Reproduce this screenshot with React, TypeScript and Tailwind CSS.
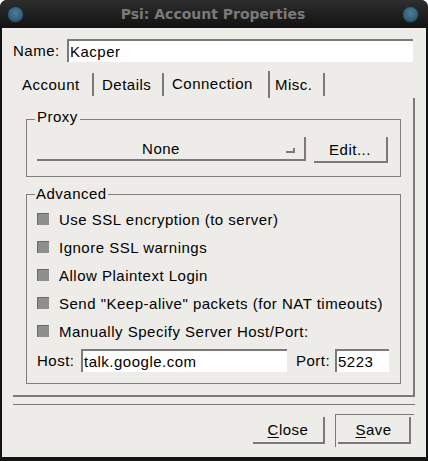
import React from "react";

const font = { fontFamily: '"Liberation Sans", Arial, sans-serif' };

function Check({ label }: { label: string }) {
  return (
    <div className="flex h-[28px] items-center">
      <div className="h-[12px] w-[12px] border-l border-t border-[#6a6a6a] bg-[#8e8e8e]" />
      <span className="ml-[10px]">{label}</span>
    </div>
  );
}

function Circle() {
  return (
    <div className="h-[17px] w-[17px] rounded-full border border-[#1a2a33] bg-[radial-gradient(circle_at_50%_40%,#4a7e9a_0%,#36617a_55%,#22404f_100%)]" />
  );
}

export default function App() {
  return (
    <div
      className="flex h-[461px] w-[428px] flex-col overflow-hidden rounded-t-[7px] bg-[#131313] text-[15px] leading-[17px] tracking-[0.5px] text-black"
      style={font}
    >
      {/* title bar */}
      <div className="flex h-[28px] shrink-0 items-center justify-between bg-gradient-to-b from-[#2e2e2e] to-[#121212] pl-[7px] pr-[9px]">
        <Circle />
        <span
          className="text-[14px] font-bold tracking-normal text-[#7a7a7a]"
          style={{ fontFamily: '"DejaVu Sans", sans-serif' }}
        >
          Psi: Account Properties
        </span>
        <Circle />
      </div>

      {/* content */}
      <div className="mx-[2px] mb-[4px] flex flex-1 flex-col bg-[#edece9] pl-[11px] pr-[11px] pt-[11px]">
        {/* name row */}
        <div className="flex h-[23px] items-center">
          <span className="w-[54px]">Name:</span>
          <div className="flex h-[23px] w-[346px] items-center border-l-2 border-t-2 border-[#7a7a7a] bg-white pl-[1px]">
            Kacper
          </div>
        </div>

        {/* tabs */}
        <div className="mt-[9px] flex h-[27px]">
          <div className="flex h-[27px] w-[81px] items-center">
            <span className="flex-1 pl-[9px]">Account</span>
            <div className="h-[23px] w-[2px] bg-[#7a7a7a]" />
          </div>
          <div className="flex h-[27px] w-[70px] items-center">
            <span className="flex-1 pl-[8px]">Details</span>
            <div className="h-[23px] w-[2px] bg-[#7a7a7a]" />
          </div>
          <div className="flex h-[27px] w-[106px] items-center">
            <span className="mb-[2px] flex-1 pl-[8px]">Connection</span>
            <div className="h-[27px] w-[2px] bg-[#7a7a7a]" />
          </div>
          <div className="flex h-[27px] w-[55px] items-center">
            <span className="flex-1 pl-[5px]">Misc.</span>
            <div className="h-[23px] w-[2px] bg-[#7a7a7a]" />
          </div>
        </div>

        {/* panel */}
        <div className="flex h-[299px] flex-col border-b-2 border-r-2 border-[#7a7a7a] pl-[13px] pr-[12px] pt-[21px]">
          {/* proxy group */}
          <div className="relative h-[58px] border border-[#7f7f7f] pl-[10px] pr-[11px] pt-[17px]">
            <span className="absolute left-[8px] top-[-12px] bg-[#edece9] px-[2px]">Proxy</span>
            <div className="flex items-start">
              <div className="relative flex h-[24px] w-[269px] items-center justify-center border-b-2 border-r-2 border-[#7a7a7a]">
                <span className="-ml-[19px]">None</span>
                <div className="absolute bottom-[6px] right-[9px] h-[5px] w-[9px] border-b-2 border-r-2 border-[#7a7a7a]" />
              </div>
              <div className="ml-[8px] flex h-[26px] w-[74px] items-center justify-center border-b-2 border-r-2 border-[#7a7a7a]">
                Edit...
              </div>
            </div>
          </div>

          {/* advanced group */}
          <div className="relative mt-[17px] h-[190px] border border-[#7f7f7f] pl-[10px] pr-[11px] pt-[10px]">
            <span className="absolute left-[8px] top-[-10px] bg-[#edece9] px-[1px]">Advanced</span>
            <Check label="Use SSL encryption (to server)" />
            <Check label="Ignore SSL warnings" />
            <Check label="Allow Plaintext Login" />
            <Check label={'Send "Keep-alive" packets (for NAT timeouts)'} />
            <Check label="Manually Specify Server Host/Port:" />
            <div className="mt-[4px] flex h-[23px] items-center">
              <span className="w-[44px]">Host:</span>
              <div className="flex h-[23px] w-[206px] items-center border-l-2 border-t-2 border-[#7a7a7a] bg-white pl-[1px]">
                talk.google.com
              </div>
              <span className="ml-[9px] w-[39px]">Port:</span>
              <div className="flex h-[23px] w-[54px] items-center border-l-2 border-t-2 border-[#7a7a7a] bg-white pl-[1px]">
                5223
              </div>
            </div>
          </div>
        </div>

        {/* separator */}
        <div className="mt-[7px] h-[1px] w-[402px] bg-[#7a7a7a]" />

        {/* buttons */}
        <div className="mt-[9px] flex justify-end pr-[1px]">
          <div className="mt-[3px] flex h-[27px] w-[72px] items-center justify-center border-b-2 border-r-2 border-[#7a7a7a]">
            <span>
              <span className="underline underline-offset-2">C</span>lose
            </span>
          </div>
          <div className="ml-[10px] h-[33px] w-[79px] border-l border-t border-[#7a7a7a] p-[2px]">
            <div className="flex h-[27px] w-[73px] items-center justify-center border-b-2 border-r-2 border-[#7a7a7a]">
              <span>
                <span className="underline underline-offset-2">S</span>ave
              </span>
            </div>
          </div>
        </div>
      </div>
    </div>
  );
}
